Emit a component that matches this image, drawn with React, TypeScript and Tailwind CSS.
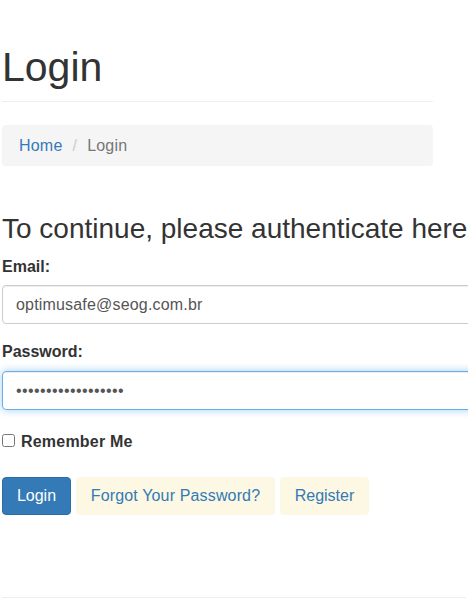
import React from "react";

const App = () => {
  return (
    <div className="h-[611px] w-[468px] overflow-hidden bg-white px-[2px] font-['Liberation_Sans',Arial,sans-serif] text-[16px] text-[#333]">
      <div className="w-[431px] border-b border-[#eee] pb-[11px] pt-[45px]">
        <h1 className="text-[41px] font-normal leading-[45px]">Login</h1>
      </div>

      <div className="mt-[23px] flex h-[41px] w-[431px] items-center rounded bg-[#f5f5f5] px-[17px] tracking-[0.2px]">
        <a className="text-[#337ab7]">Home</a>
        <span className="px-[10px] text-[#ccc]">/</span>
        <span className="text-[#777]">Login</span>
      </div>

      <h3 className="mt-[47px] whitespace-nowrap text-[28px] font-normal leading-[31px]">
        To continue, please authenticate here
      </h3>

      <form className="w-[560px]">
        <label className="mt-[12px] block font-bold leading-[22px]">Email:</label>
        <input
          readOnly
          defaultValue="optimusafe@seog.com.br"
          className="mt-[7px] block h-[39px] w-full rounded border border-[#ccc] pl-[13px] text-[16px] tracking-[0.18px] text-[#555] shadow-[inset_0_1px_1px_rgba(0,0,0,0.075)] outline-none"
        />

        <label className="mt-[17px] block font-bold leading-[22px]">Password:</label>
        <input
          readOnly
          type="password"
          defaultValue="optimusafe12345678"
          className="mt-[8px] block h-[39px] w-full rounded border border-[#66afe9] pl-[13px] text-[16px] tracking-[0.4px] text-[#555] shadow-[inset_0_1px_1px_rgba(0,0,0,0.075),0_0_8px_rgba(102,175,233,0.6)] outline-none"
        />

        <label className="mt-[21px] flex items-start gap-[6px] font-bold leading-[22px] tracking-[0.2px]">
          <input type="checkbox" className="m-0 mt-[3px] h-[13px] w-[13px]" />
          Remember Me
        </label>

        <div className="mt-[24px] flex gap-[5px]">
          <button type="button" className="flex h-[38px] w-[69px] items-center justify-center rounded border border-[#2e6da4] bg-[#337ab7] text-white">
            Login
          </button>
          <a className="flex h-[38px] w-[199px] items-center justify-center rounded bg-[#fcf8e3] tracking-[0.15px] text-[#337ab7]">
            Forgot Your Password?
          </a>
          <a className="flex h-[38px] w-[89px] items-center justify-center rounded bg-[#fcf8e3] text-[#337ab7]">
            Register
          </a>
        </div>
      </form>

      <div className="mt-[82px] border-t border-[#eee]" />
    </div>
  );
};

export default App;
